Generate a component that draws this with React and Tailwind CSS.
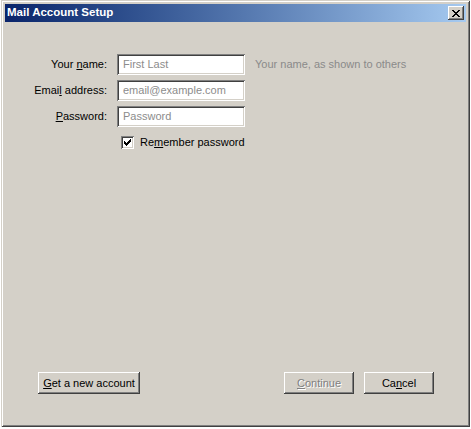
import React from "react";

const font = { fontFamily: '"Liberation Sans", Arial, sans-serif' };

function CloseGlyph() {
  const rows = [
    "11000011",
    "01100110",
    "00111100",
    "00011000",
    "00111100",
    "01100110",
    "11000011",
  ];
  const rects = [];
  rows.forEach((r, y) =>
    r.split("").forEach((c, x) => {
      if (c === "1") rects.push(<rect key={x + "-" + y} x={x} y={y} width="1" height="1" fill="#000" />);
    })
  );
  return (
    <svg width="8" height="7" viewBox="0 0 8 7" shapeRendering="crispEdges">
      {rects}
    </svg>
  );
}

function CheckGlyph() {
  const rows = [
    "0000001",
    "0000011",
    "1000111",
    "1101110",
    "1111100",
    "0111000",
    "0010000",
  ];
  const rects = [];
  rows.forEach((r, y) =>
    r.split("").forEach((c, x) => {
      if (c === "1") rects.push(<rect key={x + "-" + y} x={x} y={y} width="1" height="1" fill="#000" />);
    })
  );
  return (
    <svg width="7" height="7" viewBox="0 0 7 7" shapeRendering="crispEdges">
      {rects}
    </svg>
  );
}

const raised =
  "shadow-[inset_-1px_-1px_0_#404040,inset_1px_1px_0_#ffffff,inset_-2px_-2px_0_#808080,inset_2px_2px_0_#d4d0c8]";
const sunken =
  "shadow-[inset_1px_1px_0_#808080,inset_-1px_-1px_0_#ffffff,inset_2px_2px_0_#404040,inset_-2px_-2px_0_#d4d0c8]";

function Field({ placeholder }) {
  return (
    <div className={`h-[21px] w-[128px] bg-white ${sunken} flex items-center pl-[6px] text-[11px] text-[#8c8c8c]`}>
      {placeholder}
    </div>
  );
}

function Button({ children, w, disabled }) {
  return (
    <div
      className={`h-[22px] ${w} bg-[#d4d0c8] ${raised} flex items-center justify-center text-[11px] ${
        disabled ? "text-[#808080] [text-shadow:1px_1px_0_#ffffff]" : "text-black"
      }`}
    >
      {children}
    </div>
  );
}

export default function App() {
  return (
    <div className="w-[471px] h-[429px] bg-white" style={font}>
      <div
        className={`ml-[1px] w-[469px] h-[427px] bg-[#d4d0c8] p-[4px] flex flex-col shadow-[inset_1px_1px_0_#d4d0c8,inset_-1px_-1px_0_#404040,inset_2px_2px_0_#ffffff,inset_-2px_-2px_0_#808080]`}
      >
        <div className="h-[18px] flex items-center justify-between bg-linear-to-r from-[#0a246a] to-[#a6caf0] pl-[2px] pr-[2px]">
          <span className="text-white font-bold text-[11.5px] leading-none">Mail Account Setup</span>
          <div className={`w-[16px] h-[14px] bg-[#d4d0c8] ${raised} flex items-center justify-center`}>
            <CloseGlyph />
          </div>
        </div>

        <div className="flex-1 flex flex-col">
          <div className="pt-[32px] grid grid-cols-[102px_128px_auto] gap-x-[10px] gap-y-[5px] items-center text-[11px] text-black">
            <div className="text-right">
              Your <span className="underline">n</span>ame:
            </div>
            <Field placeholder="First Last" />
            <div className="text-[#8a8a8a]">Your name, as shown to others</div>

            <div className="text-right">
              Emai<span className="underline">l</span> address:
            </div>
            <Field placeholder="email@example.com" />
            <div />

            <div className="text-right">
              <span className="underline">P</span>assword:
            </div>
            <Field placeholder="Password" />
            <div />
          </div>

          <div className="ml-[116px] mt-[7px] flex items-center gap-[6px] text-[11px] text-black">
            <div className={`w-[13px] h-[13px] bg-white ${sunken} flex items-center justify-center`}>
              <CheckGlyph />
            </div>
            <span>
              Re<span className="underline">m</span>ember password
            </span>
          </div>

          <div className="mt-auto pb-[29px] flex items-center pl-[33px] pr-[32px]">
            <Button w="w-[102px]">
              <span>
                <span className="underline">G</span>et a new account
              </span>
            </Button>
            <div className="flex-1" />
            <div className="flex gap-[10px]">
              <Button w="w-[70px]" disabled>
                <span>
                  <span className="underline">C</span>ontinue
                </span>
              </Button>
              <Button w="w-[70px]">
                <span>
                  Ca<span className="underline">n</span>cel
                </span>
              </Button>
            </div>
          </div>
        </div>
      </div>
    </div>
  );
}
